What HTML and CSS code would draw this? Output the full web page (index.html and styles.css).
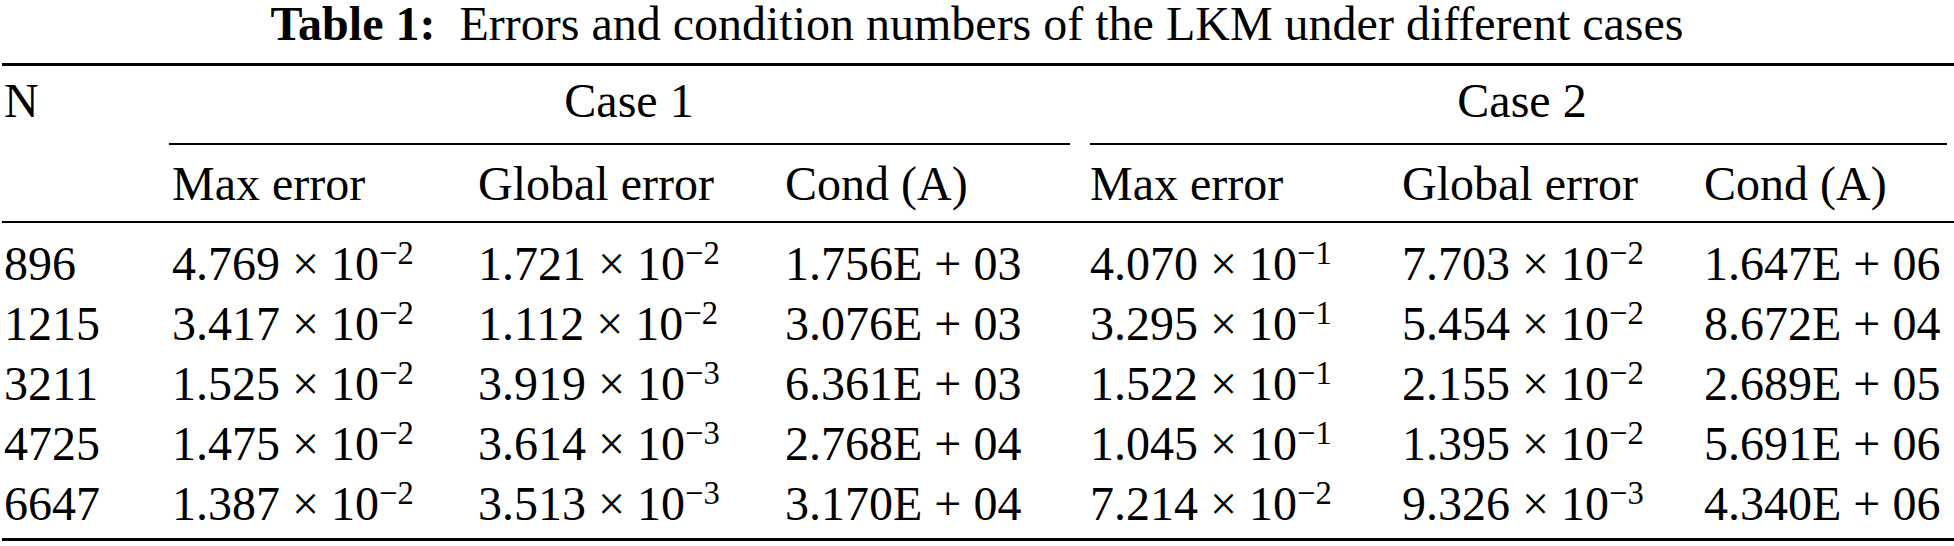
FILE: index.html
```html
<!DOCTYPE html>
<html lang="en">
  <head>
    <meta charset="UTF-8" />
    <meta name="viewport" content="width=device-width, initial-scale=1.0" />
    <title>Table 1</title>
    <link rel="stylesheet" href="styles.css">
  </head>
  <body>
    <div class="caption"><b>Table 1:</b> Errors and condition numbers of the LKM under different cases</div>
    <div class="table">
      <div class="rule heavy"></div>
      <div class="row head-top">
        <div>N</div>
        <div class="group">Case 1</div>
        <div class="group">Case 2</div>
      </div>
      <div class="row cmids">
        <div></div>
        <div class="cmid first"></div>
        <div class="cmid second"></div>
      </div>
      <div class="row head-sub">
        <div></div>
        <div>Max error</div>
        <div>Global error</div>
        <div>Cond (A)</div>
        <div>Max error</div>
        <div>Global error</div>
        <div>Cond (A)</div>
      </div>
      <div class="rule mid"></div>
      <div class="body">
        <div class="row">
          <div>896</div>
          <div>4.769 × 10<sup>−2</sup></div>
          <div>1.721 × 10<sup>−2</sup></div>
          <div>1.756E + 03</div>
          <div>4.070 × 10<sup>−1</sup></div>
          <div>7.703 × 10<sup>−2</sup></div>
          <div>1.647E + 06</div>
        </div>
        <div class="row">
          <div>1215</div>
          <div>3.417 × 10<sup>−2</sup></div>
          <div>1.112 × 10<sup>−2</sup></div>
          <div>3.076E + 03</div>
          <div>3.295 × 10<sup>−1</sup></div>
          <div>5.454 × 10<sup>−2</sup></div>
          <div>8.672E + 04</div>
        </div>
        <div class="row">
          <div>3211</div>
          <div>1.525 × 10<sup>−2</sup></div>
          <div>3.919 × 10<sup>−3</sup></div>
          <div>6.361E + 03</div>
          <div>1.522 × 10<sup>−1</sup></div>
          <div>2.155 × 10<sup>−2</sup></div>
          <div>2.689E + 05</div>
        </div>
        <div class="row">
          <div>4725</div>
          <div>1.475 × 10<sup>−2</sup></div>
          <div>3.614 × 10<sup>−3</sup></div>
          <div>2.768E + 04</div>
          <div>1.045 × 10<sup>−1</sup></div>
          <div>1.395 × 10<sup>−2</sup></div>
          <div>5.691E + 06</div>
        </div>
        <div class="row">
          <div>6647</div>
          <div>1.387 × 10<sup>−2</sup></div>
          <div>3.513 × 10<sup>−3</sup></div>
          <div>3.170E + 04</div>
          <div>7.214 × 10<sup>−2</sup></div>
          <div>9.326 × 10<sup>−3</sup></div>
          <div>4.340E + 06</div>
        </div>
      </div>
      <div class="rule heavy bottom"></div>
    </div>
  </body>
</html>
```

FILE: styles.css
```css
body {
  margin: 0;
  background: #fff;
  color: #000;
  font-family: "Liberation Serif", "Times New Roman", serif;
  font-size: 48px;
}

.caption {
  text-align: center;
  line-height: 48px;
  margin-bottom: 15px;
  white-space: nowrap;
}

.caption b {
  margin-right: 12px;
}

.rule {
  margin-left: 2px;
  border-top: 2px solid #000;
}

.rule.heavy {
  border-top-width: 3px;
}

.rule.mid {
  margin-top: 7px;
}

.rule.bottom {
  margin-top: 4px;
}

.row {
  display: grid;
  grid-template-columns: 168px 306px 307px 305px 312px 302px 1fr;
  line-height: 60px;
  white-space: nowrap;
}

.row > div {
  padding-left: 4px;
}

.row.head-top {
  margin-top: 5px;
}

.row.head-sub {
  margin-top: 9px;
}

.group {
  grid-column: span 3;
  text-align: center;
}

.row.cmids {
  line-height: 0;
  margin-top: 12px;
}

.row.cmids > div {
  padding: 0;
}

.cmid {
  grid-column: span 3;
  border-top: 2px solid #000;
}

.cmid.first {
  margin: 0 16px 0 1px;
}

.cmid.second {
  margin: 0 7px 0 4px;
}

.body {
  margin-top: 11px;
}

sup {
  font-size: 0.68em;
  line-height: 0;
  vertical-align: 0.5em;
}
```
